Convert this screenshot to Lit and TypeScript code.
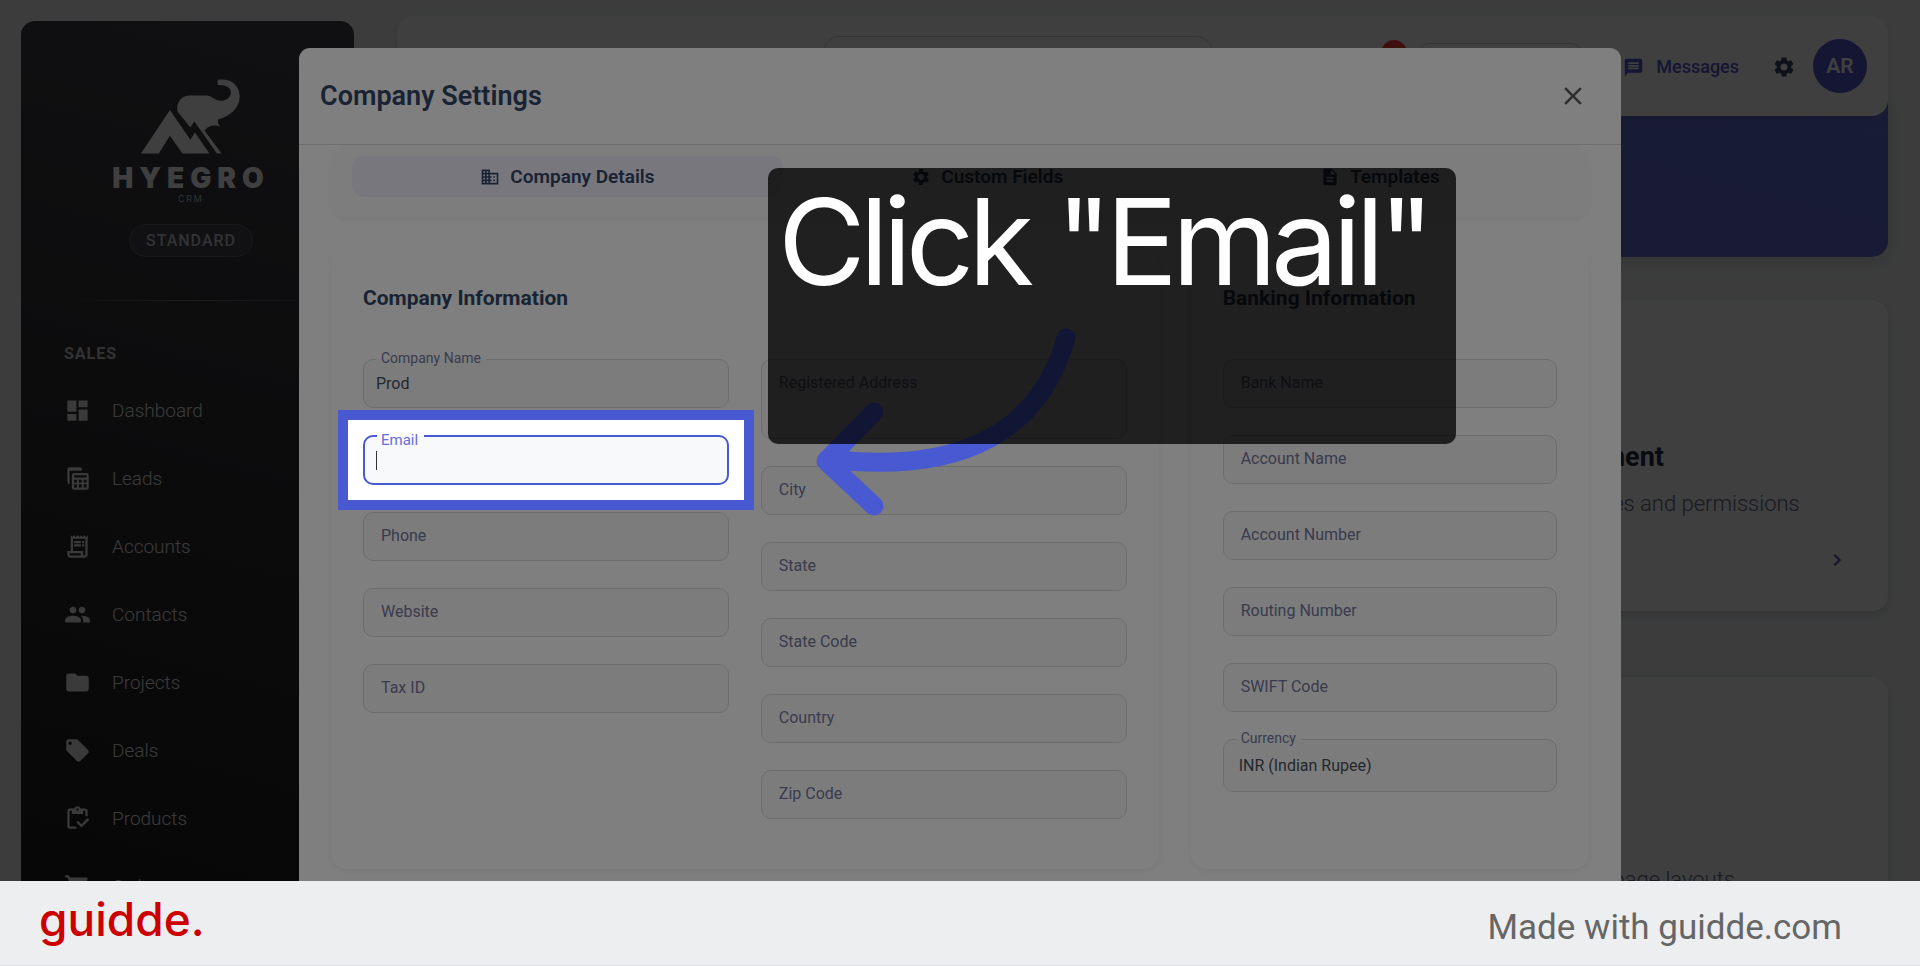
import { LitElement, html, svg, css, nothing, SVGTemplateResult } from "lit";
import { customElement } from "lit/decorators.js";
import { classMap } from "lit/directives/class-map.js";

type Field = {
  id: string;
  label: string;
  value?: string;
  kind?: "input" | "textarea" | "select";
  active?: boolean;
};

const icons: Record<string, SVGTemplateResult> = {
  dashboard: svg`<path d="M3 13h8V3H3v10zm0 8h8v-6H3v6zm10 0h8V11h-8v10zm0-18v6h8V3h-8z"/>`,
  leads: svg`<path d="M4 4v11a1 1 0 0 0 1 1V5h11V4a2 2 0 0 0-2-2H5a2 2 0 0 0-2 2v11c0 1.100.9 2 2 2v-2H5V4z"/><path fill-rule="evenodd" d="M9 7h11a2 2 0 0 1 2 2v11a2 2 0 0 1-2 2H9a2 2 0 0 1-2-2V9c0-1.100.900-2 2-2zm0 2v2h11V9zm0 4v2.500h2.500V13zm4.200 0v2.500h2.600V13zm4.300 0v2.500H20V13zM9 17.200V20h2.500v-2.800zm4.200 0V20h2.600v-2.800zm4.300 0V20H20v-2.800z"/>`,
  accounts: svg`<path d="M19.500 3.500 18 2l-1.500 1.500L15 2l-1.500 1.500L12 2l-1.500 1.500L9 2 7.500 3.500 6 2v14H3v3c0 1.660 1.340 3 3 3h12c1.660 0 3-1.340 3-3V2l-1.500 1.500zM15 20H6c-.550 0-1-.450-1-1v-1h10v2zm4-1c0 .550-.450 1-1 1s-1-.450-1-1v-3H8V5h11v14z"/><path d="M9 7h6v2H9zM16 7h2v2h-2zM9 10h6v2H9zM16 10h2v2h-2z"/>`,
  contacts: svg`<path d="M16 11c1.660 0 2.990-1.340 2.990-3S17.660 5 16 5s-3 1.340-3 3 1.340 3 3 3zm-8 0c1.660 0 2.990-1.340 2.990-3S9.660 5 8 5 5 6.340 5 8s1.340 3 3 3zm0 2c-2.330 0-7 1.170-7 3.500V19h14v-2.500c0-2.330-4.670-3.500-7-3.500zm8 0c-.290 0-.620.020-.970.050 1.160.840 1.970 1.970 1.970 3.450V19h6v-2.500c0-2.330-4.670-3.500-7-3.500z"/>`,
  projects: svg`<path d="M10 4H4c-1.100 0-1.990.900-1.990 2L2 18c0 1.100.900 2 2 2h16c1.100 0 2-.900 2-2V8c0-1.100-.900-2-2-2h-8l-2-2z"/>`,
  deals: svg`<path d="m21.410 11.580-9-9C12.050 2.220 11.550 2 11 2H4c-1.100 0-2 .900-2 2v7c0 .550.220 1.050.590 1.420l9 9c.360.360.860.580 1.410.580s1.050-.220 1.410-.590l7-7c.370-.360.590-.860.590-1.410s-.230-1.060-.590-1.420zM5.500 7C4.670 7 4 6.330 4 5.500S4.670 4 5.500 4 7 4.670 7 5.500 6.330 7 5.500 7z"/>`,
  products: svg`<path d="M5 5h2v3h10V5h2v5h2V5c0-1.100-.900-2-2-2h-4.180C14.400 1.840 13.300 1 12 1s-2.400.840-2.820 2H5c-1.100 0-2 .900-2 2v14c0 1.100.900 2 2 2h6v-2H5V5zm7-2c.550 0 1 .450 1 1s-.450 1-1 1-1-.450-1-1 .450-1 1-1z"/><path d="M21 11.500 15.510 17l-3.010-3-1.500 1.500 4.510 4.500L22.500 13z"/>`,
  cart: svg`<path d="M7 18c-1.100 0-1.990.900-1.990 2S5.900 22 7 22s2-.900 2-2-.900-2-2-2zM1 2v2h2l3.600 7.590-1.350 2.450c-.160.280-.250.610-.250.960 0 1.100.900 2 2 2h12v-2H7.420l-.130-.250.900-1.750h7.450c.750 0 1.410-.410 1.750-1.030l3.580-6.490A1 1 0 0 0 20 4H5.210l-.940-2H1zm16 16c-1.100 0-1.990.900-1.990 2s.890 2 1.990 2 2-.900 2-2-.900-2-2-2z"/>`,
  business: svg`<path d="M12 7V3H2v18h20V7H12zM6 19H4v-2h2v2zm0-4H4v-2h2v2zm0-4H4V9h2v2zm0-4H4V5h2v2zm4 12H8v-2h2v2zm0-4H8v-2h2v2zm0-4H8V9h2v2zm0-4H8V5h2v2zm10 12h-8v-2h2v-2h-2v-2h2v-2h-2V9h8v10zm-2-8h-2v2h2v-2zm0 4h-2v2h2v-2z"/>`,
  gear: svg`<path d="M19.140 12.940c.040-.300.060-.610.060-.940 0-.320-.020-.640-.070-.940l2.030-1.580c.180-.140.230-.410.120-.610l-1.920-3.320c-.120-.220-.370-.290-.590-.220l-2.390.960c-.500-.380-1.030-.700-1.620-.940l-.360-2.540c-.040-.240-.240-.410-.480-.410h-3.840c-.240 0-.430.170-.470.410l-.360 2.540c-.590.240-1.130.570-1.620.940l-2.390-.960c-.220-.080-.470 0-.590.220L2.740 8.870c-.120.210-.080.470.120.610l2.030 1.580c-.050.300-.090.630-.090.940s.020.640.070.940l-2.030 1.580c-.180.140-.230.410-.120.610l1.920 3.320c.120.220.370.290.590.220l2.390-.960c.500.380 1.030.700 1.620.940l.360 2.540c.050.240.240.410.480.410h3.840c.240 0 .440-.170.470-.410l.360-2.540c.590-.240 1.130-.560 1.620-.940l2.390.960c.220.080.470 0 .590-.220l1.920-3.320c.120-.220.070-.470-.120-.610l-2.010-1.580zM12 15.600c-1.980 0-3.600-1.620-3.600-3.600s1.620-3.600 3.600-3.600 3.600 1.620 3.600 3.600-1.620 3.600-3.600 3.600z"/>`,
  document: svg`<path d="M14 2H6c-1.100 0-1.990.900-1.990 2L4 20c0 1.100.890 2 1.990 2H18c1.100 0 2-.900 2-2V8l-6-6zm2 16H8v-2h8v2zm0-4H8v-2h8v2zm-3-5V3.500L18.500 9H13z"/>`,
  message: svg`<path d="M20 2H4c-1.100 0-1.990.900-1.990 2L2 22l4-4h14c1.100 0 2-.900 2-2V4c0-1.100-.900-2-2-2zM6 9h12v2H6V9zm12 5H6v-2h12v2zm0-6H6V6h12v2z"/>`,
  chevron: svg`<path d="M10 6 8.590 7.410 13.170 12l-4.580 4.590L10 18l6-6z"/>`,
  close: svg`<path d="M19 6.410 17.590 5 12 10.590 6.410 5 5 6.410 10.590 12 5 17.590 6.410 19 12 13.410 17.590 19 19 17.590 13.410 12z"/>`,
};

const icon = (name: string) =>
  html`<svg class="icon" viewBox="0 0 24 24" aria-hidden="true">${icons[name]}</svg>`;

@customElement("app-root")
export class AppRoot extends LitElement {
  private nav = [
    ["dashboard", "Dashboard"],
    ["leads", "Leads"],
    ["accounts", "Accounts"],
    ["contacts", "Contacts"],
    ["projects", "Projects"],
    ["deals", "Deals"],
    ["products", "Products"],
    ["cart", "Orders"],
  ];

  private tabs = [
    ["business", "Company Details"],
    ["gear", "Custom Fields"],
    ["document", "Templates"],
  ];

  private company: Field[] = [
    { id: "name", label: "Company Name", value: "Prod" },
    { id: "email", label: "Email", active: true },
    { id: "phone", label: "Phone" },
    { id: "website", label: "Website" },
    { id: "tax", label: "Tax ID" },
  ];

  private address: Field[] = [
    { id: "address", label: "Registered Address", kind: "textarea" },
    { id: "city", label: "City" },
    { id: "state", label: "State" },
    { id: "state-code", label: "State Code" },
    { id: "country", label: "Country" },
    { id: "zip", label: "Zip Code" },
  ];

  private banking: Field[] = [
    { id: "bank", label: "Bank Name" },
    { id: "account-name", label: "Account Name" },
    { id: "account-number", label: "Account Number" },
    { id: "routing", label: "Routing Number" },
    { id: "swift", label: "SWIFT Code" },
    { id: "currency", label: "Currency", value: "INR (Indian Rupee)", kind: "select" },
  ];

  static styles = css`
    :host {
      display: grid;
      grid-template-rows: minmax(0, 1fr) auto;
      height: 100vh;
      font-family: Roboto, "Liberation Sans", sans-serif;
      color: #344767;
    }
    * { box-sizing: border-box; }
    button, input, textarea, select { font: inherit; color: inherit; margin: 0; }
    button { border: 0; background: none; padding: 0; }
    h1, h2, h3, p, ul { margin: 0; padding: 0; }
    a { color: inherit; text-decoration: none; }
    .icon { width: 24px; height: 24px; fill: currentColor; flex: none; display: block; }

    .stage { position: relative; overflow: hidden; background: #f0f2f5; }
    .app { display: flex; gap: 43px; padding-right: 32px; height: 100%; }

    .sidebar {
      flex: none;
      width: 333px;
      height: 100vh;
      margin: 21px 0 0 21px;
      border-radius: 14px;
      background: linear-gradient(195deg, #42424a, #191919);
      color: #fff;
      padding: 56px 32px 0 43px;
    }
    .brand { display: flex; flex-direction: column; align-items: center; padding-right: 4px; }
    .brand svg { width: 100px; height: 78px; fill: #fff; display: block; }
    .brand-name { font: 900 28px/32px Inter, sans-serif; letter-spacing: 6px; margin-top: 7px; }
    .brand-sub { font-size: 9px; line-height: 10px; letter-spacing: 2px; font-weight: 300; }
    .plan {
      margin-top: 20px;
      border: 1px solid #606068;
      background: #46464e;
      border-radius: 17px;
      padding: 0 16px;
      font-size: 16px;
      line-height: 31px;
      font-weight: 500;
      letter-spacing: 1px;
      color: #c8c8cc;
    }
    .rule { height: 1px; margin: 43px 0; background: linear-gradient(90deg, transparent, #77777c, transparent); }
    .group { font-size: 16px; line-height: 20px; font-weight: 700; letter-spacing: 1px; color: #c8c8cc; }
    .nav { list-style: none; margin-top: 12px; }
    .nav a {
      display: flex;
      align-items: center;
      gap: 21px;
      height: 68px;
      font-size: 19px;
      font-weight: 300;
      color: #e8e8ea;
    }
    .nav .icon { width: 27px; height: 27px; }

    .main { flex: 1; min-width: 0; padding-top: 16px; }
    .topbar {
      position: relative;
      display: flex;
      align-items: center;
      justify-content: flex-end;
      height: 100px;
      padding: 0 21px;
      border-radius: 16px;
      background: #fcfcfc;
      box-shadow: 0 4px 12px rgba(0, 0, 0, .06);
    }
    .search { width: 390px; height: 60px; border: 1px solid #d2d6da; border-radius: 16px; background: none; margin-right: 168px; }
    .badge { width: 26px; height: 26px; border-radius: 50%; background: #f44335; align-self: flex-start; margin: 24px 12px 0 0; }
    .switch { width: 163px; height: 46px; border: 1px solid #d2d6da; border-radius: 10px; margin-right: 41px; }
    .messages { display: flex; align-items: center; gap: 12px; color: #5058d0; font-size: 18px; line-height: 22px; font-weight: 500; padding-top: 2px; }
    .messages .icon { width: 21px; height: 21px; }
    .settings { margin: 0 17px 0 33px; padding-top: 2px; }
    .avatar {
      width: 54px; height: 54px; border-radius: 50%;
      background: #5058d0; color: #fff; font-size: 21px; font-weight: 600;
    }
    .hero { height: 157px; margin-top: -16px; border-radius: 0 0 16px 16px; background: linear-gradient(195deg, #6470d4, #6068c0); box-shadow: 0 4px 16px rgba(0, 0, 0, .14); }
    .tile {
      display: grid;
      align-content: start;
      height: 311px;
      margin-top: 43px;
      padding-top: 140px;
      border-radius: 16px;
      background: #fcfcfc;
      box-shadow: 0 4px 8px rgba(0, 0, 0, .14);
    }
    .tile + .tile { margin-top: 66px; padding-top: 173px; }
    .tile-body { width: 384px; justify-self: end; }
    .tile h3 { font-size: 27px; line-height: 34px; font-weight: 700; color: #252f40; }
    .tile p { font-size: 22px; line-height: 28px; font-weight: 300; color: #67698a; margin-top: 16px; white-space: nowrap; }
    .tile .icon { margin: 30px 0 0 auto; color: #4a50c8; }
    .tile a { display: block; padding-right: 39px; }

    .backdrop {
      position: absolute;
      inset: 0;
      display: flex;
      justify-content: center;
      align-items: flex-start;
      padding-top: 48px;
      background: rgba(0, 0, 0, .5);
    }
    .dialog { width: 100%; max-width: 1322px; min-height: 100vh; border-radius: 11px; background: #fff; }
    .dialog-head {
      display: flex;
      align-items: center;
      justify-content: space-between;
      height: 97px;
      padding: 0 34px 0 21px;
      border-bottom: 1px solid #dcdcdc;
    }
    .dialog-head h1 { font-size: 27px; line-height: 36px; font-weight: 600; }
    .close { color: #5c5c5c; }
    .close .icon { width: 30px; height: 30px; margin-right: -1px; }
    .dialog-body { padding: 0 32px; }
    .tabs {
      display: flex;
      padding: 11px 21px 21px;
      border-radius: 16px;
      background: #fbfbfb;
      box-shadow: 0 3px 6px rgba(0, 0, 0, .05);
    }
    .tab {
      flex: 1 1 auto;
      display: flex;
      align-items: center;
      justify-content: center;
      gap: 10px;
      height: 41px;
      border-radius: 11px;
      font-size: 19px;
      font-weight: 600;
    }
    .tab .icon { width: 20px; height: 20px; }
    .tab.selected { background: #f0eefa; }
    .cards { display: grid; grid-template-columns: minmax(0, 827fr) minmax(0, 398fr); gap: 32px; margin-top: 31px; }
    .card { padding: 32px; height: 620px; border-radius: 16px; box-shadow: 0 2px 6px rgba(0, 0, 0, .06); }
    .card h2 { font-size: 21px; line-height: 34px; font-weight: 700; }
    .columns { display: grid; grid-auto-flow: column; grid-auto-columns: minmax(0, 1fr); gap: 32px; margin-top: 44px; }
    .stack { display: flex; flex-direction: column; gap: 27px; }

    .field { position: relative; display: grid; font-size: 16px; }
    .field > * { grid-area: 1 / 1; }
    .control {
      width: 100%;
      height: 49px;
      border: 0;
      border-radius: 10px;
      padding: 0 13px;
      background: #f8f9fb;
      color: #495057;
      outline: none;
      resize: none;
      appearance: none;
      display: block;
    }
    textarea.control { height: 80px; }
    select.control { height: 53px; padding: 0 16px; }
    .outline {
      margin: 0;
      padding: 0 12px;
      min-width: 0;
      border: 1px solid #d8dcdc;
      border-radius: 10px;
      pointer-events: none;
    }
    .outline legend { height: 0; padding: 0 5px; font-size: 14px; line-height: 0; visibility: hidden; }
    .label { height: 49px; line-height: 48px; padding-left: 18px; color: #74779a; pointer-events: none; justify-self: start; }
    .floating .label { height: 18px; line-height: 18px; margin-top: -10px; font-size: 14px; }
    .active .control { height: 50px; }
    .active .outline { border: 2px solid #4959d1; }
    .active .outline legend { font-size: 15px; }
    .active .label { margin-top: -4px; font-size: 15px; color: #6670d0; z-index: 1; }
    .caret { width: 1px; height: 19px; margin: 16px 0 0 13px; background: #333; }
    .spotlight {
      position: absolute;
      inset: -25px;
      z-index: 2;
      border: 10px solid #4959d1;
      box-shadow: 0 0 0 4000px rgba(0, 0, 0, .5);
      pointer-events: none;
    }

    .arrow { position: absolute; z-index: 3; left: calc(50% - 144px); top: 328px; width: 260px; height: 190px; }
    .caption {
      position: absolute;
      z-index: 4;
      left: calc(50% - 192px);
      top: 168px;
      width: 688px;
      height: 276px;
      padding: 0 10px;
      border-radius: 10px;
      background: rgba(0, 0, 0, .75);
      color: #fff;
      font: 400 120px/148px Inter, sans-serif;
      letter-spacing: -6px;
      white-space: nowrap;
    }

    .footer {
      display: flex;
      align-items: center;
      justify-content: space-between;
      height: 85px;
      padding: 0 78px 0 39px;
      background: #edeef0;
      border-bottom: 1px solid #dddfe2;
      position: relative;
    }
    .logo { font: 500 46px/60px Inter, sans-serif; color: #cc0000; padding-bottom: 8px; }
    .made { font-size: 35px; line-height: 42px; color: #666; padding-top: 9px; }
  `;

  private control(f: Field) {
    if (f.kind === "textarea") return html`<textarea class="control" id=${f.id}></textarea>`;
    if (f.kind === "select")
      return html`<select class="control" id=${f.id}><option>${f.value}</option></select>`;
    return html`<input class="control" id=${f.id} type="text" .value=${f.value ?? ""} />`;
  }

  private field(f: Field) {
    const floating = !!(f.value || f.active);
    return html`<div class=${classMap({ field: true, floating, active: !!f.active })}>
      ${this.control(f)}
      <fieldset class="outline" aria-hidden="true">${floating ? html`<legend>${f.label}</legend>` : nothing}</fieldset>
      <label class="label" for=${f.id}>${f.label}</label>
      ${f.active ? html`<span class="caret"></span><div class="spotlight"></div>` : nothing}
    </div>`;
  }

  private stack(fields: Field[]) {
    return html`<div class="stack">${fields.map((f) => this.field(f))}</div>`;
  }

  render() {
    return html`
      <div class="stage">
        <div class="app">
          <nav class="sidebar">
            <div class="brand">
              <svg viewBox="64 54 304 232" role="img" aria-label="Hyegro">
                <path d="M64 284 152 152 214 242 228 220 272 284H190L152 230 118 284Z" />
                <path d="M174 148C174 124 190 108 212 108H262C280 108 288 124 306 124 326 124 337 112 337 98 337 84 324 75 297 76V60C344 52 365 84 364 112 362 150 332 170 298 181 296 190 299 197 306 203 284 195 270 199 257 214L309 284H295L226 186 214 205 178 160C175 156 174 152 174 148Z" />
              </svg>
              <div class="brand-name">HYEGRO</div>
              <div class="brand-sub">CRM</div>
              <div class="plan">STANDARD</div>
            </div>
            <div class="rule"></div>
            <div class="group">SALES</div>
            <ul class="nav">
              ${this.nav.map(([i, t]) => html`<li><a href="#">${icon(i)}<span>${t}</span></a></li>`)}
            </ul>
          </nav>
          <main class="main">
            <header class="topbar">
              <input class="search" type="search" aria-label="Search" />
              <span class="badge"></span>
              <span class="switch"></span>
              <button class="messages">${icon("message")}Messages</button>
              <button class="settings" aria-label="Settings">${icon("gear")}</button>
              <button class="avatar">AR</button>
            </header>
            <div class="hero"></div>
            <section class="tile">
              <a class="tile-body" href="#">
                <h3>Management</h3>
                <p>Manage roles and permissions</p>
                ${icon("chevron")}
              </a>
            </section>
            <section class="tile">
              <a class="tile-body" href="#"><p>Customize page layouts</p></a>
            </section>
          </main>
        </div>

        <div class="backdrop">
          <section class="dialog" role="dialog" aria-labelledby="dialog-title">
            <header class="dialog-head">
              <h1 id="dialog-title">Company Settings</h1>
              <button class="close" aria-label="Close">${icon("close")}</button>
            </header>
            <div class="dialog-body">
              <div class="tabs" role="tablist">
                ${this.tabs.map(
                  ([i, t], n) => html`<button class=${classMap({ tab: true, selected: n === 0 })} role="tab">
                    ${icon(i)}<span>${t}</span>
                  </button>`
                )}
              </div>
              <div class="cards">
                <section class="card">
                  <h2>Company Information</h2>
                  <div class="columns">${this.stack(this.company)}${this.stack(this.address)}</div>
                </section>
                <section class="card">
                  <h2>Banking Information</h2>
                  <div class="columns">${this.stack(this.banking)}</div>
                </section>
              </div>
            </div>
          </section>
        </div>

        <svg class="arrow" viewBox="816 328 260 190" aria-hidden="true">
          <path
            d="M1066 338C1040 430 965 473 836 460M874 412 826 461 874 506"
            fill="none" stroke="#4959d1" stroke-width="19" stroke-linecap="round" stroke-linejoin="round"
          />
        </svg>
        <div class="caption">Click "Email"</div>
      </div>
      <footer class="footer">
        <div class="logo">guidde.</div>
        <div class="made">Made with guidde.com</div>
      </footer>
    `;
  }
}
